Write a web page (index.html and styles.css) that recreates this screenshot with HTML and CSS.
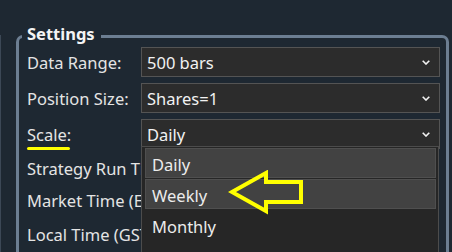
FILE: index.html
```html
<!DOCTYPE html>
<html>
<head>
<meta charset="utf-8">
<link rel="stylesheet" href="styles.css">
</head>
<body>
<div class="page">
  <div class="edge"></div>
  <div class="group">
    <div class="legend">Settings</div>
    <div class="rows">
      <div class="row">
        <span class="label">Data Range:</span>
        <div class="select"><span>500 bars</span><svg class="chev" width="8" height="5" viewBox="0 0 8 5"><path d="M0.7 0.7 L4 4 L7.3 0.7" fill="none" stroke="#f2f2f2" stroke-width="1.6"/></svg></div>
      </div>
      <div class="row">
        <span class="label">Position Size:</span>
        <div class="select"><span>Shares=1</span><svg class="chev" width="8" height="5" viewBox="0 0 8 5"><path d="M0.7 0.7 L4 4 L7.3 0.7" fill="none" stroke="#f2f2f2" stroke-width="1.6"/></svg></div>
      </div>
      <div class="row">
        <span class="label scale">Scale:</span>
        <div class="select"><span>Daily</span><svg class="chev" width="8" height="5" viewBox="0 0 8 5"><path d="M0.7 0.7 L4 4 L7.3 0.7" fill="none" stroke="#f2f2f2" stroke-width="1.6"/></svg></div>
      </div>
      <div class="row plain r4"><span class="label">Strategy Run Time:</span></div>
      <div class="row plain r5"><span class="label">Market Time (EST):</span></div>
      <div class="row plain r6"><span class="label">Local Time (GST):</span></div>
    </div>
  </div>
  <div class="popup">
    <div class="item sel">Daily</div>
    <div class="item hov">Weekly</div>
    <div class="item">Monthly</div>
    <div class="item">Quarterly</div>
  </div>
  <svg class="arrow" width="80" height="48" viewBox="0 0 80 48">
    <path d="M4 22 L38 3 L38 12 L73 12 L73 32 L38 32 L38 41 Z" fill="none" stroke="#ffff00" stroke-width="4" stroke-linejoin="miter"/>
  </svg>
</div>
</body>
</html>
```
FILE: styles.css
```css
html, body {
  margin: 0;
  padding: 0;
  background: #1e2832;
  overflow: hidden;
}
.page {
  position: relative;
  width: 452px;
  height: 252px;
  overflow: hidden;
  font-family: "Noto Sans", "Open Sans", sans-serif;
  color: #e4e4e4;
  padding-top: 35px;
  box-sizing: border-box;
}
.edge {
  position: absolute;
  left: 0;
  top: 35px;
  width: 1px;
  height: 217px;
  background: #3c4856;
}
.group {
  position: relative;
  margin-left: 16px;
  width: 433px;
  height: 260px;
  box-sizing: border-box;
  border: 3px solid #6c7e92;
  border-bottom: none;
  border-radius: 7px 7px 0 0;
}
.legend {
  position: absolute;
  left: 3px;
  top: -15px;
  padding: 0 6px 0 5px;
  background: #1e2832;
  font-weight: 700;
  font-size: 16.5px;
  line-height: 22px;
  color: #f4f4f4;
}
.rows {
  padding: 9px 6px 0 8px;
  display: flex;
  flex-direction: column;
  gap: 6px;
}
.row {
  display: flex;
  align-items: center;
  height: 30px;
}
.label {
  width: 114px;
  font-size: 16.5px;
  white-space: nowrap;
  position: relative;
}
.scale::after {
  content: "";
  position: absolute;
  left: 0;
  top: 24px;
  width: 43px;
  height: 3.5px;
  border-radius: 2px;
  background: #ffff00;
}
.select {
  flex: 1;
  height: 30px;
  box-sizing: border-box;
  background: #2c2c2c;
  border: 1px solid #545454;
  display: flex;
  align-items: center;
  justify-content: space-between;
  padding: 0 9px 0 5px;
  font-size: 16.5px;
  color: #f2f2f2;
}
.row.plain { height: 28px; }
.r4 { margin-top: -1px; }
.r5 { margin-top: -2px; }
.r6 { margin-top: 0px; }
.popup {
  position: absolute;
  left: 141px;
  top: 146px;
  width: 298px;
  height: 120px;
  box-sizing: border-box;
  background: #262626;
  border: 1px solid #4c4c4c;
  padding: 1px 2px 0 3px;
  display: flex;
  flex-direction: column;
  gap: 1px;
}
.item {
  height: 30px;
  flex: none;
  box-sizing: border-box;
  display: flex;
  align-items: center;
  padding: 3px 0 0 6px;
  font-size: 16.5px;
  color: #ececec;
  border: 1px solid transparent;
}
.item.sel, .item.hov {
  background: #424242;
  border-color: #4f4f4f;
}
.arrow {
  position: absolute;
  left: 228px;
  top: 170px;
}
```
